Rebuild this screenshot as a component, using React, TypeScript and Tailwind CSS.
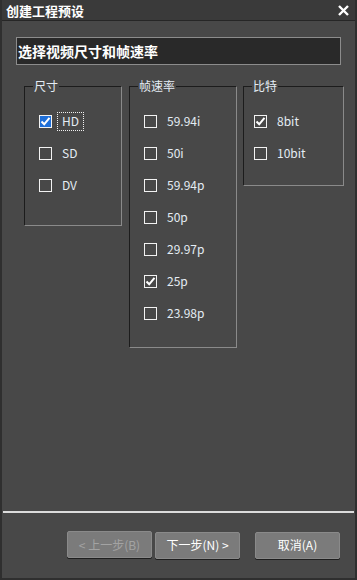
const font = { fontFamily: '"Noto Sans CJK SC", "Noto Sans", sans-serif' };

type Item = { label: string; checked?: boolean; blue?: boolean; focus?: boolean };

const Check = ({ checked, blue }: { checked?: boolean; blue?: boolean }) => (
  <div
    className={`w-[13px] h-[13px] border border-[#f2f2f2] shrink-0 flex items-center justify-center ${
      blue ? 'bg-[#1f6fd8]' : 'bg-transparent'
    }`}
  >
    {checked && (
      <svg width="11" height="11" viewBox="0 0 11 11">
        <path d="M1.5 5.5 L4.2 8.3 L9.5 1.8" fill="none" stroke="#ffffff" strokeWidth="2" />
      </svg>
    )}
  </div>
);

const Group = ({
  title,
  items,
  width,
  inset,
  pb,
}: {
  title: string;
  items: Item[];
  width: string;
  inset: string;
  pb: string;
}) => (
  <div className={`relative shrink-0 ${width} border border-t-[#1c1c1c] border-l-[#1c1c1c] border-r-[#8a8a8a] border-b-[#8a8a8a] pt-[18px] ${pb} ${inset}`}>
    <div className="absolute -top-[9px] left-[8px] px-[1px] bg-[#484848] text-[12px] leading-[16px] text-[#e4ecf4]">
      {title}
    </div>
    {items.map((it) => (
      <div key={it.label} className="h-[32px] flex items-center">
        <Check checked={it.checked} blue={it.blue} />
        <div
          className={`ml-[5px] px-[4px] h-[19px] flex items-center text-[12px] text-[#e4ecf4] border border-dotted ${
            it.focus ? 'border-[#f0f0f0]' : 'border-transparent'
          }`}
        >
          {it.label}
        </div>
      </div>
    ))}
  </div>
);

const Button = ({ label, disabled }: { label: string; disabled?: boolean }) => (
  <button
    className={`w-[85px] h-[27px] rounded-[2px] bg-[#7b7b7b] border border-[#8a8a8a] shadow-[0_1px_0_#1e1e1e] text-[12px] ${
      disabled ? 'text-[#a3a3a3]' : 'text-white'
    }`}
  >
    {label}
  </button>
);

export default function App() {
  return (
    <div
      style={font}
      className="w-[357px] h-[580px] flex flex-col bg-[#484848] border-x-2 border-b-2 border-[#2f2f2f] overflow-hidden"
    >
      <div className="h-[21px] shrink-0 bg-[#3a3a3a] border-b border-[#262626] flex items-center justify-between pl-[4px] pr-[6px]">
        <span className="text-[13px] font-bold text-white leading-none">创建工程预设</span>
        <svg width="11" height="11" viewBox="0 0 11 11">
          <path d="M1 1 L10 10 M10 1 L1 10" stroke="#ffffff" strokeWidth="2.4" />
        </svg>
      </div>

      <div className="flex-1 flex flex-col px-[14px] pt-[16px]">
        <div className="h-[28px] bg-[#292929] border border-[#8c8c8c] flex items-center px-[1px]">
          <span className="text-[14px] font-bold text-white">选择视频尺寸和帧速率</span>
        </div>

        <div className="flex items-start mt-[21px] pl-[8px]">
          <Group
            title="尺寸"
            width="w-[98px]"
            inset="pl-[14px]"
            pb="pb-[24px]"
            items={[
              { label: 'HD', checked: true, blue: true, focus: true },
              { label: 'SD' },
              { label: 'DV' },
            ]}
          />
          <div className="ml-[7px] shrink-0">
            <Group
              title="帧速率"
              width="w-[108px]"
              inset="pl-[14px]"
              pb="pb-[18px]"
              items={[
                { label: '59.94i' },
                { label: '50i' },
                { label: '59.94p' },
                { label: '50p' },
                { label: '29.97p' },
                { label: '25p', checked: true },
                { label: '23.98p' },
              ]}
            />
          </div>
          <div className="ml-[6px] shrink-0">
            <Group
              title="比特"
              width="w-[101px]"
              inset="pl-[10px]"
              pb="pb-[16px]"
              items={[{ label: '8bit', checked: true }, { label: '10bit' }]}
            />
          </div>
        </div>
      </div>

      <div className="shrink-0 mx-[1px] h-[2px] bg-[#dcdcdc]" />
      <div className="shrink-0 h-[65px] flex justify-end items-start pt-[18px] pr-[15px]">
        <Button label="< 上一步(B)" disabled />
        <div className="ml-[3px]">
          <Button label="下一步(N) >" />
        </div>
        <div className="ml-[15px]">
          <Button label="取消(A)" />
        </div>
      </div>
    </div>
  );
}
